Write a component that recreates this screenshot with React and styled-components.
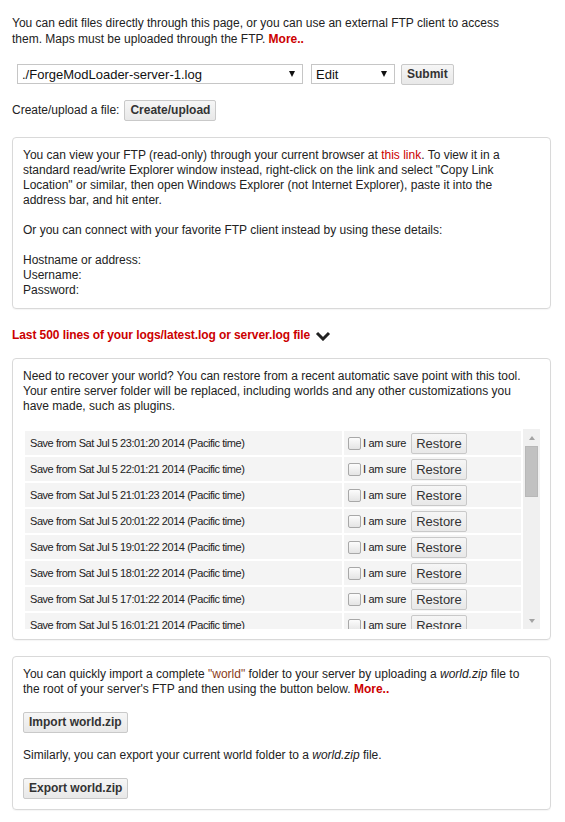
import styled, { createGlobalStyle } from "styled-components";

const GlobalStyle = createGlobalStyle`
    body {
        margin : 0;
        background : #fff;
        font-family : "Liberation Sans", Arial, sans-serif;
        font-size : 12px;
        line-height : 15px;
        color : #222;
    }
`;

const Page = styled.div`
    width : 539px;
    padding : 15px 14px 20px 12px;
`;

const Intro = styled.p`
    margin : 0;
    line-height : 16px;
`;

const Red = styled.span`
    color : #cc0000;
    font-weight : ${(p) => (p.$bold ? "bold" : "normal")};
    cursor : pointer;
`;

const Quote = styled.span`
    color : #8b3a1a;
`;

const FileRow = styled.div`
    display : flex;
    align-items : center;
    margin : 16px 0 0 5px;
    height : 22px;
`;

const SelectWrap = styled.div`
    position : relative;
    width : ${(p) => p.$w}px;
    margin-right : ${(p) => p.$gap}px;
`;

const Select = styled.select`
    appearance : none;
    -webkit-appearance : none;
    width : 100%;
    height : 20px;
    border : 1px solid #c6c6c6;
    border-radius : 0;
    background : #fff;
    font-family : "Liberation Sans", Arial, sans-serif;
    font-size : 13px;
    color : #111;
    padding : 0 16px 0 4px;
    outline : none;
`;

const Arrow = styled.span`
    position : absolute;
    right : 8px;
    top : 7px;
    width : 0;
    height : 0;
    border-left : 3px solid transparent;
    border-right : 3px solid transparent;
    border-top : 6px solid #111;
    pointer-events : none;
`;

const Button = styled.button`
    font-family : "Liberation Sans", Arial, sans-serif;
    font-size : ${(p) => (p.$small ? "13px" : "12px")};
    font-weight : ${(p) => (p.$small ? "normal" : "bold")};
    line-height : 15px;
    color : #333;
    padding : 2px ${(p) => (p.$small ? "4px" : "5px")};
    background : linear-gradient(#f6f6f6, #e8e8e8);
    border : 1px solid #c9c9c9;
    border-radius : 2px;
    cursor : pointer;
`;

const CreateRow = styled.div`
    display : flex;
    align-items : center;
    gap : 5px;
    margin-top : 15px;
`;

const Panel = styled.div`
    border : 1px solid #d9d9d9;
    border-radius : 4px;
    padding : 10px;
    margin-top : ${(p) => p.$top || 0}px;
    box-shadow : 0 1px 1px rgba(0,0,0,0.04);
`;

const Para = styled.p`
    margin : 0 0 15px 0;
    &:last-child { margin-bottom : 0; }
`;

const Heading = styled.div`
    display : flex;
    align-items : center;
    gap : 5px;
    margin-top : 19px;
    color : #cc0000;
    font-weight : bold;
    letter-spacing : -0.08px;
    cursor : pointer;
`;

const ScrollArea = styled.div`
    display : flex;
    height : 200px;
    margin-top : 15px;
`;

const List = styled.div`
    width : 500px;
    overflow-y : auto;
    scrollbar-width : none;
`;

const ScrollTrack = styled.div`
    width : 17px;
    display : flex;
    flex-direction : column;
    background : #f0f0f0;
`;

const ScrollArrow = styled.div`
    height : 17px;
    display : flex;
    align-items : center;
    justify-content : center;
    &::after {
        content : "";
        width : 0;
        height : 0;
        border-left : 3.5px solid transparent;
        border-right : 3.5px solid transparent;
        ${(p) => (p.$down ? "border-top" : "border-bottom")} : 4px solid #a3a3a3;
    }
`;

const Rail = styled.div`
    flex : 1;
    padding : 0 2px;
`;

const Thumb = styled.div`
    height : 51px;
    background : #c1c1c1;
    border : 1px solid #b8b8b8;
    box-sizing : border-box;
`;

const Table = styled.table`
    width : 500px;
    border-spacing : 2px;
    font-size : 11px;
    line-height : 13px;
`;

const Cell = styled.td`
    background : #f4f4f4;
    height : 24px;
    padding : ${(p) => (p.$right ? "0 2px 0 4px" : "0 5px")};
    width : ${(p) => (p.$right ? "171px" : "auto")};
    vertical-align : middle;
    white-space : nowrap;
    letter-spacing : ${(p) => (p.$right ? "0" : "-0.45px")};
`;

const Sure = styled.label`
    display : flex;
    align-items : center;
    gap : 2px;
`;

const Check = styled.input`
    appearance : none;
    -webkit-appearance : none;
    width : 13px;
    height : 13px;
    margin : 0;
    border : 1px solid #a8a8a8;
    border-radius : 2px;
    background : linear-gradient(#fcfcfc, #e4e4e4);
`;

const SureText = styled.span`
    margin-right : 3px;
    letter-spacing : -0.3px;
`;

const ButtonRow = styled.div`
    margin : 14px 0 15px;
    &:last-child { margin-bottom : 0; }
`;

const saves = [
    "Sat Jul 5 23:01:20 2014",
    "Sat Jul 5 22:01:21 2014",
    "Sat Jul 5 21:01:23 2014",
    "Sat Jul 5 20:01:22 2014",
    "Sat Jul 5 19:01:22 2014",
    "Sat Jul 5 18:01:22 2014",
    "Sat Jul 5 17:01:22 2014",
    "Sat Jul 5 16:01:21 2014",
    "Sat Jul 5 15:01:22 2014",
    "Sat Jul 5 14:01:21 2014",
    "Sat Jul 5 13:01:22 2014",
    "Sat Jul 5 12:01:21 2014",
    "Sat Jul 5 11:01:22 2014",
    "Sat Jul 5 10:01:21 2014",
    "Sat Jul 5 9:01:22 2014",
    "Sat Jul 5 8:01:21 2014",
    "Sat Jul 5 7:01:22 2014",
    "Sat Jul 5 6:01:21 2014",
    "Sat Jul 5 5:01:22 2014",
    "Sat Jul 5 4:01:21 2014",
    "Sat Jul 5 3:01:22 2014",
    "Sat Jul 5 2:01:21 2014",
    "Sat Jul 5 1:01:22 2014",
    "Sat Jul 5 0:01:21 2014",
    "Fri Jul 4 23:01:22 2014",
];

const Chevron = () => (
    <svg width="16" height="10" viewBox="0 0 16 10">
        <polyline points="2,2 8,8 14,2" fill="none" stroke="#222" strokeWidth="3" />
    </svg>
);

const App = () => {
    return (
        <>
            <GlobalStyle />
            <Page>
                <Intro>
                    You can edit files directly through this page, or you can use an external FTP client to access<br />
                    them. Maps must be uploaded through the FTP. <Red $bold>More..</Red>
                </Intro>

                <FileRow>
                    <SelectWrap $w={286} $gap={8}>
                        <Select defaultValue="fml">
                            <option value="fml">./ForgeModLoader-server-1.log</option>
                            <option value="latest">./logs/latest.log</option>
                            <option value="props">./server.properties</option>
                        </Select>
                        <Arrow />
                    </SelectWrap>
                    <SelectWrap $w={84} $gap={6}>
                        <Select defaultValue="edit">
                            <option value="edit">Edit</option>
                            <option value="download">Download</option>
                            <option value="delete">Delete</option>
                        </Select>
                        <Arrow />
                    </SelectWrap>
                    <Button>Submit</Button>
                </FileRow>

                <CreateRow>
                    <span>Create/upload a file:</span>
                    <Button>Create/upload</Button>
                </CreateRow>

                <Panel $top={16}>
                    <Para>
                        You can view your FTP (read-only) through your current browser at <Red>this link</Red>. To view it in a<br />
                        standard read/write Explorer window instead, right-click on the link and select "Copy Link<br />
                        Location" or similar, then open Windows Explorer (not Internet Explorer), paste it into the<br />
                        address bar, and hit enter.
                    </Para>
                    <Para>Or you can connect with your favorite FTP client instead by using these details:</Para>
                    <Para>
                        Hostname or address:<br />
                        Username:<br />
                        Password:
                    </Para>
                </Panel>

                <Heading>
                    <span>Last 500 lines of your logs/latest.log or server.log file</span>
                    <Chevron />
                </Heading>

                <Panel $top={15}>
                    <Para>
                        Need to recover your world? You can restore from a recent automatic save point with this tool.<br />
                        Your entire server folder will be replaced, including worlds and any other customizations you<br />
                        have made, such as plugins.
                    </Para>
                    <ScrollArea>
                        <List>
                            <Table>
                                <tbody>
                                    {saves.map((s, i) => (
                                        <tr key={i}>
                                            <Cell>Save from {s} (Pacific time)</Cell>
                                            <Cell $right>
                                                <Sure>
                                                    <Check type="checkbox" />
                                                    <SureText>I am sure</SureText>
                                                    <Button $small>Restore</Button>
                                                </Sure>
                                            </Cell>
                                        </tr>
                                    ))}
                                </tbody>
                            </Table>
                        </List>
                        <ScrollTrack>
                            <ScrollArrow />
                            <Rail>
                                <Thumb />
                            </Rail>
                            <ScrollArrow $down />
                        </ScrollTrack>
                    </ScrollArea>
                </Panel>

                <Panel $top={16}>
                    <Para>
                        You can quickly import a complete <Quote>"world"</Quote> folder to your server by uploading a <i>world.zip</i> file to<br />
                        the root of your server's FTP and then using the button below. <Red $bold>More..</Red>
                    </Para>
                    <ButtonRow>
                        <Button>Import world.zip</Button>
                    </ButtonRow>
                    <Para>
                        Similarly, you can export your current world folder to a <i>world.zip</i> file.
                    </Para>
                    <ButtonRow>
                        <Button>Export world.zip</Button>
                    </ButtonRow>
                </Panel>
            </Page>
        </>
    );
};

export default App;
